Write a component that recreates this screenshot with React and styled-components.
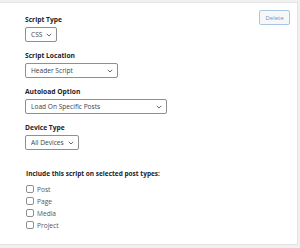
import React from "react";
import styled, { createGlobalStyle } from "styled-components";

const GlobalStyle = createGlobalStyle`
  html, body {
    margin: 0;
    padding: 0;
    background: #f0f0f1;
    font-family: "Open Sans", "Liberation Sans", sans-serif;
  }
  #root {
    width: 300px;
    height: 248px;
    overflow: hidden;
  }
`;

const Page = styled.div`
  padding: 2px 2px 3px 0;
  height: 248px;
  box-sizing: border-box;
`;

const Card = styled.div`
  display: flex;
  justify-content: space-between;
  align-items: flex-start;
  height: 100%;
  box-sizing: border-box;
  background: #fff;
  border: 1px solid #e2e4e7;
  border-left: none;
  padding: 12px 7px 0 25px;
`;

const Form = styled.div`
  display: flex;
  flex-direction: column;
`;

const Field = styled.div`
  display: flex;
  flex-direction: column;
  align-items: flex-start;
  gap: 3px;
  margin-bottom: 9px;
`;

const Label = styled.div`
  font-size: 6.7px;
  font-weight: 700;
  line-height: 9px;
  color: #1d2327;
`;

const Select = styled.div`
  display: flex;
  align-items: center;
  justify-content: space-between;
  gap: 4px;
  box-sizing: border-box;
  min-width: ${({ $w }) => $w}px;
  height: 15px;
  padding: 0 4px 0 5px;
  border: 1px solid #8c8f94;
  border-radius: 2px;
  font-size: 6.6px;
  color: #3c434a;
  background: #fff;
  white-space: nowrap;
`;

const Chevron = () => (
  <svg width="6" height="4" viewBox="0 0 6 4">
    <path d="M0.8 0.9 L3 3 L5.2 0.9" fill="none" stroke="#50575e" strokeWidth="0.9" />
  </svg>
);

const Group = styled.div`
  margin-top: 10px;
`;

const GroupTitle = styled.div`
  font-size: 6.5px;
  font-weight: 700;
  color: #1d2327;
  line-height: 9px;
  padding-left: 1px;
  margin-bottom: 5px;
`;

const CheckRow = styled.label`
  display: flex;
  align-items: center;
  gap: 3px;
  height: 12px;
  padding-left: 1px;
  font-size: 6.6px;
  color: #50575e;
`;

const Box = styled.span`
  width: 8px;
  height: 8px;
  box-sizing: border-box;
  border: 1px solid #8c8f94;
  border-radius: 2px;
  background: #fff;
`;

const DeleteButton = styled.button`
  box-sizing: border-box;
  width: 31px;
  height: 15px;
  padding: 0;
  font-family: inherit;
  font-size: 6px;
  color: #6f98c4;
  background: #f6f7f7;
  border: 1px solid #a8c6e6;
  border-radius: 2px;
  margin-top: -5px;
`;

const fields = [
  { label: "Script Type", value: "CSS", w: 30 },
  { label: "Script Location", value: "Header Script", w: 93 },
  { label: "Autoload Option", value: "Load On Specific Posts", w: 142 },
  { label: "Device Type", value: "All Devices", w: 52 },
];

const postTypes = ["Post", "Page", "Media", "Project"];

export default function App() {
  return (
    <>
      <GlobalStyle />
      <Page>
        <Card>
          <Form>
            {fields.map((f) => (
              <Field key={f.label}>
                <Label>{f.label}</Label>
                <Select $w={f.w}>
                  <span>{f.value}</span>
                  <Chevron />
                </Select>
              </Field>
            ))}
            <Group>
              <GroupTitle>Include this script on selected post types:</GroupTitle>
              {postTypes.map((t) => (
                <CheckRow key={t}>
                  <Box />
                  {t}
                </CheckRow>
              ))}
            </Group>
          </Form>
          <DeleteButton>Delete</DeleteButton>
        </Card>
      </Page>
    </>
  );
}
